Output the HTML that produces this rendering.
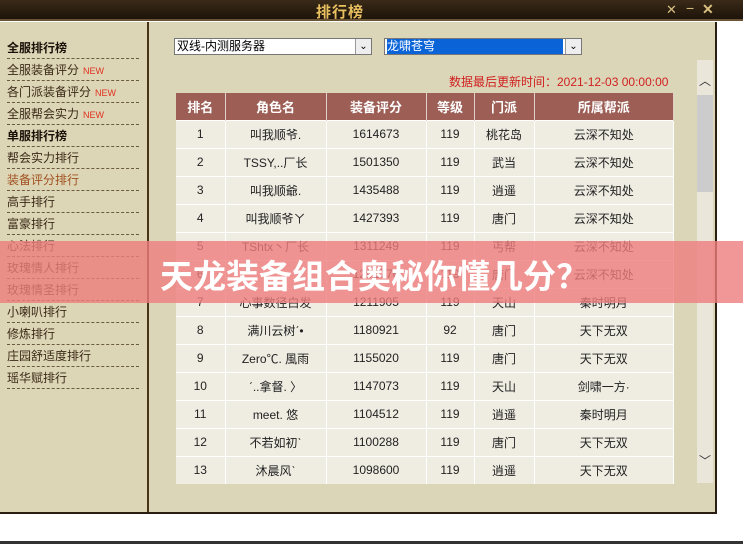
<!DOCTYPE html>
<html><head><meta charset="utf-8"><style>
*{margin:0;padding:0;box-sizing:border-box}
body{width:743px;height:544px;overflow:hidden;background:#fff;font-family:"Liberation Sans","Noto Sans CJK SC",sans-serif;position:relative}
.title{position:absolute;left:0;top:0;width:743px;height:21px;background:linear-gradient(#3a2a18,#1e140a);border-bottom:2px solid #6a5436}
.title .t{position:absolute;left:316px;top:1px;color:#e8c060;font-weight:bold;font-size:15px;letter-spacing:1px}
.frame{position:absolute;left:0;top:22px;width:717px;height:492px;background:#dcd6b8;border-right:2px solid #2a1e10;border-bottom:2px solid #2a1e10}
.side{position:absolute;left:0;top:22px;width:149px;height:490px;background:#ddd6b6;border-right:2px solid #4a3418}
.item{position:absolute;left:7px;width:132px;height:22px;font-size:12px;line-height:22px;color:#3a2a18;border-bottom:1px dashed #6a5a40}
.item b{font-weight:bold;color:#1a1008}
.new{color:#e03020;font-size:9px;margin-left:4px}
.sel{position:absolute;height:17px;background:#fff;border:1px solid #777;font-size:12px;line-height:15px;padding-left:2px}
.sel .arr{position:absolute;right:0;top:0;width:16px;height:15px;background:#eee;border-left:1px solid #999;font-size:10px;text-align:center;line-height:15px}
table{position:absolute;left:176px;top:93px;width:498px;border-collapse:collapse;font-size:12px;color:#222}
th{background:#9c5e55;color:#fff;height:27px;font-size:13px;border-right:1px solid #e0d0c8}
td{height:28px;background:#efece2;text-align:center;border-right:1px solid #fff;border-top:1px solid #fff}
.upd{position:absolute;left:449px;top:73px;color:#d02020;font-size:12px}
.sb{position:absolute;left:697px;top:60px;width:16px;height:423px;background:#eae6da}
.thumb{position:absolute;left:697px;top:95px;width:16px;height:97px;background:#ccc}
.banner{position:absolute;left:0;top:241px;width:743px;height:62px;background:rgba(238,125,125,0.8)}
.banner span{position:absolute;left:160px;top:9px;color:#fff;font-weight:bold;font-size:33px;font-family:"Noto Sans CJK SC",sans-serif;letter-spacing:0px}
</style></head><body>
<div class="title"><span class="t">排行榜</span>
<span style="position:absolute;left:666px;top:2px;color:#d8c080;font-size:13px">✕</span>
<span style="position:absolute;left:686px;top:0px;color:#d8c080;font-size:14px">−</span>
<span style="position:absolute;left:702px;top:1px;color:#d8c080;font-size:14px;font-weight:bold">✕</span></div>
<div class="frame"></div>
<div class="side"></div>
<div class="item" style="top:37px"><b>全服排行榜</b></div>
<div class="item" style="top:59px">全服装备评分<span class="new">NEW</span></div>
<div class="item" style="top:81px">各门派装备评分<span class="new">NEW</span></div>
<div class="item" style="top:103px">全服帮会实力<span class="new">NEW</span></div>
<div class="item" style="top:125px"><b>单服排行榜</b></div>
<div class="item" style="top:147px">帮会实力排行</div>
<div class="item" style="top:169px;color:#a05020">装备评分排行</div>
<div class="item" style="top:191px">高手排行</div>
<div class="item" style="top:213px">富豪排行</div>
<div class="item" style="top:235px">心法排行</div>
<div class="item" style="top:257px">玫瑰情人排行</div>
<div class="item" style="top:279px">玫瑰情圣排行</div>
<div class="item" style="top:301px">小喇叭排行</div>
<div class="item" style="top:323px">修炼排行</div>
<div class="item" style="top:345px">庄园舒适度排行</div>
<div class="item" style="top:367px">瑶华赋排行</div>
<div class="sel" style="left:174px;top:38px;width:198px">双线-内测服务器<span class="arr">⌄</span></div>
<div class="sel" style="left:384px;top:38px;width:198px"><span style="background:#0a64d8;color:#fff;display:inline-block;width:176px">龙啸苍穹</span><span class="arr">⌄</span></div>
<div class="upd">数据最后更新时间：2021-12-03 00:00:00</div>
<div class="sb"></div><div class="thumb"></div>
<div style="position:absolute;left:699px;top:72px;font-size:12px;color:#333">︿</div>
<div style="position:absolute;left:699px;top:452px;font-size:12px;color:#333">﹀</div>
<table>
<tr><th style="width:49px">排名</th><th style="width:101px">角色名</th><th style="width:100px">装备评分</th><th style="width:48px">等级</th><th style="width:60px">门派</th><th>所属帮派</th></tr>
<tr><td>1</td><td>叫我顺爷.</td><td>1614673</td><td>119</td><td>桃花岛</td><td>云深不知处</td></tr>
<tr><td>2</td><td>TSSY,..厂长</td><td>1501350</td><td>119</td><td>武当</td><td>云深不知处</td></tr>
<tr><td>3</td><td>叫我顺爺.</td><td>1435488</td><td>119</td><td>逍遥</td><td>云深不知处</td></tr>
<tr><td>4</td><td>叫我顺爷ㄚ</td><td>1427393</td><td>119</td><td>唐门</td><td>云深不知处</td></tr>
<tr><td>5</td><td>TShtx丶厂长</td><td>1311249</td><td>119</td><td>丐帮</td><td>云深不知处</td></tr>
<tr><td>6</td><td>.</td><td>1291776</td><td>119</td><td>唐门</td><td>云深不知处</td></tr>
<tr><td>7</td><td>心事数径白发</td><td>1211905</td><td>119</td><td>天山</td><td>秦时明月</td></tr>
<tr><td>8</td><td>满川云树ˊ•</td><td>1180921</td><td>92</td><td>唐门</td><td>天下无双</td></tr>
<tr><td>9</td><td>Zero℃. 風雨</td><td>1155020</td><td>119</td><td>唐门</td><td>天下无双</td></tr>
<tr><td>10</td><td>ˊ..拿督. 〉</td><td>1147073</td><td>119</td><td>天山</td><td>剑啸一方·</td></tr>
<tr><td>11</td><td>meet. 悠</td><td>1104512</td><td>119</td><td>逍遥</td><td>秦时明月</td></tr>
<tr><td>12</td><td>不若如初ˋ</td><td>1100288</td><td>119</td><td>唐门</td><td>天下无双</td></tr>
<tr><td>13</td><td>沐晨风ˋ</td><td>1098600</td><td>119</td><td>逍遥</td><td>天下无双</td></tr>
</table>
<div class="banner"><span>天龙装备组合奥秘你懂几分？</span></div>
<div style="position:absolute;left:0;top:541px;width:743px;height:3px;background:#333"></div>
</body></html>
